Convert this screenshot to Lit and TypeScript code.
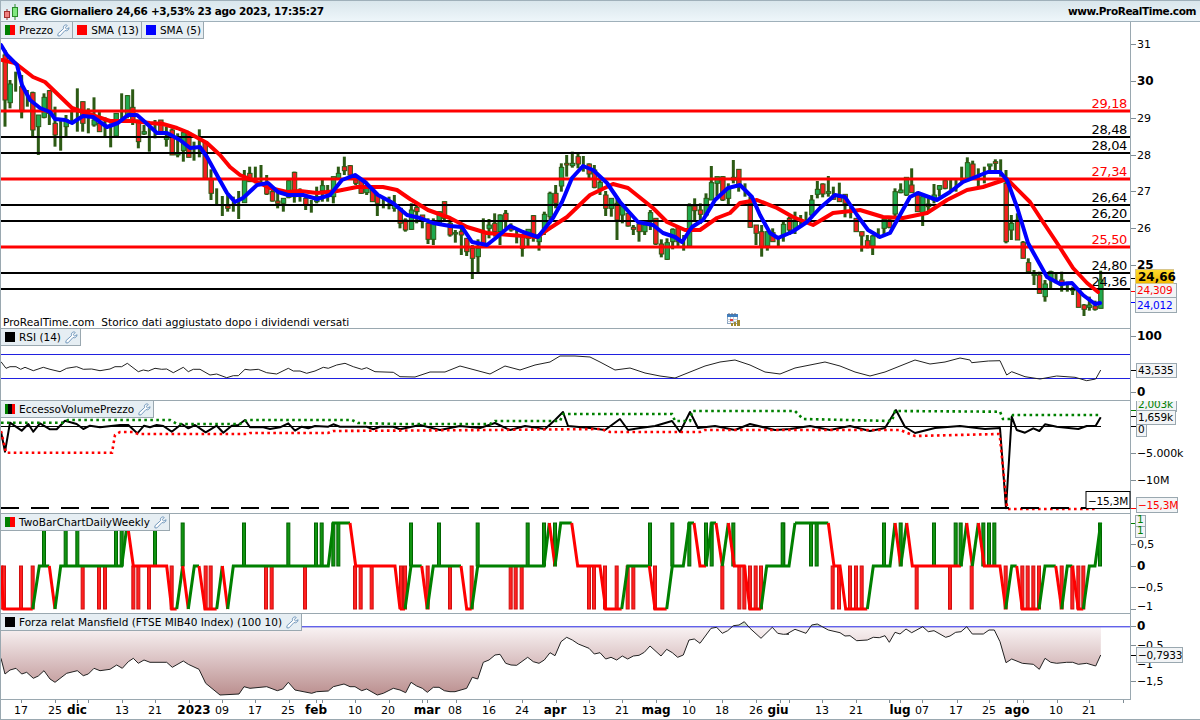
import { LitElement, html, css, svg } from "lit";
import { customElement } from "lit/decorators.js";

type C = { x: number; t: number; b: number; bt?: number; bb?: number; c?: string };
type Raw = [number, number, number, number?, number?, string?];
const cz = (ox: number, oy: number, a: Raw[]): C[] =>
  a.map(([z, t, b, bt, bb, c]) => ({
    x: ox + z / 3, t: oy + t / 3, b: oy + b / 3,
    bt: bt === undefined ? undefined : oy + bt / 3,
    bb: bb === undefined ? undefined : oy + bb / 3, c,
  }));

const CANDLES: C[] = [
  ...cz(0, 0, [[15,150,380,165,300,"r"],[30,240,325,252,308,"g"],[47,215,275],[65,225,355,260,335,"r"],[82,270,320],[98,275,408,278,390,"r"],[115,345,465,345,380,"g"],[132,280,355,292,352,"g"],[148,270,375,272,340,"r"],[165,320,440,370,405,"r"],[182,360,452],[198,345,408,360,380,"g"],[215,335,370],[232,265,395],[248,305,395,305,370,"r"],[265,325,400],[282,292,380,360,375,"g"],[298,330,395,370,395,"r"],[315,352,408],[332,370,442],[348,340,410,340,408,"g"],[365,280,362],[382,285,355,287,350,"g"],[398,268,375,322,362,"r"]]),
  ...cz(130, 120, [[25,0,85,0,65,"r"],[42,15,45,35,42,"g"],[58,20,95],[75,0,55],[92,0,40,0,35,"r"],[109,20,80,50,58,"g"],[126,25,105,30,105,"r"],[143,40,112,100,105,"g"],[160,35,125,38,92,"g"],[176,40,112,40,112,"r"],[192,65,122],[208,28,112],[225,65,175,65,175,"r"],[243,148,240,178,220,"r"],[260,205,252],[277,228,288],[293,225,275,258,265,"r"],[310,230,275],[326,213,297],[343,150,248,180,248,"g"],[359,140,185,160,185,"r"],[376,140,190],[393,135,190],[410,165,225,190,222,"r"],[427,200,245,215,243,"r"],[443,215,265,243,250,"r"],[460,235,275,235,250,"g"],[476,180,235,182,232,"g"],[493,155,248,157,230,"r"],[510,205,245],[527,225,270,235,255,"r"],[544,240,278],[560,200,250,230,245,"g"],[577,180,245,197,212,"g"],[593,195,245],[610,170,250,170,230,"g"],[625,140,180,160,175,"g"],[643,110,165,140,152,"r"],[660,135,175,137,165,"r"],[677,165,195,180,190,"r"],[693,175,222,180,220,"r"],[710,185,225,205,218,"g"],[727,200,245,210,245,"r"],[742,225,288,225,250,"r"],[760,235,265],[777,230,268],[793,225,275,255,265,"g"],[810,265,325,265,310,"r"],[826,295,335,300,330,"r"]]),
  ...cz(400, 120, [[34,250,330,270,328,"g"],[50,250,310,262,275,"r"],[67,285,325,285,295,"r"],[84,295,372,310,358,"r"],[100,295,375,310,358,"g"],[117,275,315,275,312,"g"],[133,245,300,245,295,"r"],[150,305,350,310,345,"r"],[166,330,368,338,342,"g"],[184,325,405,335,345,"r"],[200,355,408,355,395,"r"],[217,375,477,385,415,"r"],[234,358,458,385,410,"g"],[250,295,375,338,372,"r"],[267,297,355,315,325,"g"],[284,280,350,310,335,"r"],[300,283,375,285,335,"g"],[317,270,325,280,302,"r"],[333,310,335,320,330,"r"],[350,330,370],[367,350,410,350,385,"r"],[384,330,378,328,355,"g"],[400,285,365,287,350,"r"],[417,350,392,350,365,"g"],[433,275,345,283,325,"g"],[450,215,310,220,290,"g"],[467,195,265,220,250,"r"],[484,130,215,142,198,"g"],[500,105,170,130,135,"r"],[517,95,143,130,137,"g"],[534,100,145,110,132,"r"],[550,108,155],[567,130,175,132,162,"r"],[583,135,205,150,202,"r"],[600,170,225,187,207,"g"],[617,213,288,225,265,"r"],[634,235,290,235,265,"g"],[651,230,360,250,300,"r"],[667,250,310,260,285,"g"],[684,278,320,280,318,"r"],[700,315,345,322,328,"r"],[717,305,365,312,335,"r"],[734,305,345,315,335,"g"],[751,270,330,278,305,"g"],[767,295,375,295,372,"r"],[784,358,412,372,402,"r"],[801,355,420,368,418,"g"],[818,325,388,328,365,"g"],[834,318,380,320,365,"r"],[851,345,392],[868,250,378,258,378,"g"],[884,235,300,258,272,"r"],[901,250,312,270,283,"r"],[918,220,290,235,285,"g"],[934,138,240,188,240,"g"],[951,170,230,170,190,"g"],[968,168,243,170,240,"r"],[985,190,255,205,235,"g"],[1000,120,190,172,180,"r"],[1016,148,215,148,200,"r"]]),
  ...cz(730, 140, [[45,130,170],[60,170,262,190,262,"r"],[78,255,315,255,280,"r"],[95,255,350,275,320,"r"],[112,275,332,275,318,"g"],[128,265,305,278,305,"r"],[145,292,320],[160,245,305,253,285,"g"],[178,230,285,235,270,"r"],[195,215,282,240,265,"g"],[212,225,262],[228,215,245],[245,165,235,180,225,"g"],[262,123,175,148,163,"g"],[278,130,172,132,162,"r"],[295,108,170,155,160,"g"],[310,140,178,168,178,"r"],[328,128,185,172,185,"r"],[345,163,232,163,190,"r"],[362,200,235],[378,235,275,235,275,"r"],[395,275,335,275,288,"r"],[412,285,325,302,320,"r"],[428,285,345,288,318,"g"],[445,265,295],[462,238,285,238,265,"g"],[478,235,265,240,262,"r"],[495,145,230,155,222,"g"],[512,130,160,150,158,"g"],[529,112,168,112,165,"g"],[545,85,155,135,158,"r"],[562,155,215,165,215,"r"],[578,165,258,170,222,"g"],[595,165,215,192,200,"r"],[612,132,190,165,180,"g"],[628,135,170,137,148,"g"],[645,122,148,122,145,"r"],[662,120,150],[678,120,155],[695,80,130],[712,52,122,68,122,"g"],[728,62,115,72,115,"r"],[745,85,140],[763,80,130],[779,72,95,72,78,"g"],[796,58,100,65,70,"r"],[812,58,110],[828,90,310,130,305,"r"]]),
  ...cz(950, 180, [[184,105,180,130,150,"g"],[202,100,180,120,180,"r"],[219,183,235,187,235,"r"],[235,235,275,248,275,"r"],[252,270,315,282,286,"g"],[268,275,340,285,340,"r"],[285,300,365,312,350,"g"],[302,272,325,275,300,"g"],[318,280,310],[335,275,335,300,315,"r"],[352,305,335],[368,320,345,328,332,"g"],[385,330,382,330,382,"r"],[402,372,408,375,388,"r"],[418,350,392,375,382,"g"],[435,362,392,378,388,"r"],[452,272,385,300,385,"g"]]),
];

const pts = (ox: number, oy: number, a: number[]) => {
  const o: [number, number][] = [];
  for (let i = 0; i < a.length; i += 2) o.push([ox + a[i] / 3, oy + a[i + 1] / 3]);
  return o;
};
const P = (p: [number, number][]) => p.map(([x, y]) => `${x.toFixed(1)},${y.toFixed(1)}`).join(" ");

const BLUE = "1,45 7,55 17,65 22,85 30,100 40,108 50,112 55,119 65,120 72,123 83,116 93,117 107,127 118,123 128,115 137,115 145,122 157,133 167,133 180,140 190,148 200,147 207,157 218,177 227,193 235,202 243,198 257,185 268,183 278,192 288,195 303,195 317,199 330,195 342,180 355,175 365,182 378,195 393,203 407,215 420,218 433,223 450,226 462,227 472,242 487,245 497,237 510,226 523,232 538,237 553,218 562,202 572,178 583,166 593,170 607,183 620,202 638,222 653,225 663,233 675,237 682,242 692,227 703,220 715,200 728,188 740,185 752,197 760,215 770,233 778,238 792,232 807,222 820,208 835,195 845,197 857,215 868,230 880,237 890,233 900,215 910,197 918,193 937,200 950,192 963,182 978,176 988,172 1000,172 1007,180 1017,207 1028,243 1033,252 1047,277 1060,284 1072,283 1083,295 1095,304 1100,303";
const RED = "2,60 15,63 33,77 45,82 72,108 83,112 110,121 133,121 150,123 163,124 177,128 187,132 207,143 220,155 230,167 240,175 257,182 270,188 287,192 300,191 317,193 337,191 357,187 383,187 397,190 410,199 428,210 450,218 467,227 487,233 510,235 537,237 547,230 567,217 590,195 613,184 628,188 653,208 667,222 685,230 700,230 717,218 730,213 740,203 757,200 777,208 793,217 813,225 833,213 860,210 883,217 903,218 927,213 947,200 967,190 983,187 1007,179 1030,202 1043,222 1057,243 1073,268 1087,283 1098,292";
const LEVELS: [number, string, number][] = [
  [111, "29,18", 1], [137, "28,48", 0], [153, "28,04", 0], [179, "27,34", 1], [205, "26,64", 0],
  [221, "26,20", 0], [247, "25,50", 1], [273, "24,80", 0], [289, "24,36", 0],
];

const RSI = P([
  ...pts(0, 310, [3,155,18,175,30,170,48,170,62,178,75,172,100,182,130,172,150,178,180,185,200,175,230,170,250,178,275,177,300,182,330,177,345,170,365,170,382,160,415,185,430,180,445,183,465,175,485,178,500,177,520,188,550,172,565,185,580,178,600,178,630,195,650,192,680,203,700,197,715,197,735,178,750,180,775,178,800,188,830,192,865,175,880,183,900,183,920,190,945,183,970,172,985,175,1010,165,1035,160,1060,170,1085,178,1100,173,1125,185,1180,187,1200,200]),
  [415,377],[430,372],[445,372],[460,366],[475,370],[490,374],[505,366],[520,370],[535,365],[550,362],[560,356],[575,356],[590,357],[600,362],[615,370],[630,368],[645,373],[660,376],[675,378],[690,372],[705,366],[720,362],[735,360],[750,365],[765,372],[780,374],[795,368],[810,365],[825,362],[840,366],[855,372],[870,376],[885,372],[900,366],[915,360],[930,364],[945,362],[960,358],
  ...pts(950, 360, [60,0,65,8,115,3,150,2,170,45,185,35,225,50,270,57,320,48,375,52,410,62,437,57,452,30]),
]);

const EVP = P([
  ...pts(0, 310, [3,365,15,425,30,338,65,362,85,342,100,365,120,340,150,358,170,358,195,332,230,342,250,357,270,347,300,352,360,345,385,345,412,370,432,347,450,352,470,345,490,348,515,365,545,342,565,355,585,345,617,367,650,347,670,368,695,347,715,345,735,330,750,352,790,352,810,357,840,352,865,340,885,362,905,350,925,355,945,348,985,350,1000,343,1020,350,1100,350,1120,358,1140,350,1180,350,1200,358]),
  [420,425],[440,430],[460,426],[480,428],[495,423],[510,430],[525,426],[545,429],[555,420],[563,412],[568,426],[590,428],[605,430],[620,419],[628,430],[640,428],[655,426],[672,421],[680,432],[690,412],[698,428],[715,426],[735,430],[750,424],[775,430],[790,429],[810,426],[830,430],[850,426],[870,431],[885,428],[896,410],[905,427],[915,433],[935,428],[960,426],[985,429],[1000,428],
  ...pts(950, 360, [168,445,185,170,200,210,225,218,250,205,268,213,285,193,320,200,385,207,410,198,437,197,452,172]),
]);
const GREEN_DOT = "1,422.7 63,422.7 68,420 170,420 177,424 240,424 247,420 352,420 358,423 400,424 490,424 495,421 560,421 563,414 672,414 675,421 690,421 692,411 795,411 803,419 892,421 895,411 1000,411.7 1003,419 1010,419 1013,415 1101,415";
const RED_DOT = "1,431 6,452.7 112,452.7 115,435 120,432 133,432 138,434 248,434 250,433 328,433 333,431 490,430 600,429 610,432 700,432 705,430 900,430 915,436 999,434 1000,438 1007,507";
const RED_DOT_LOW = "1008,509 1095,509";

const L = (v: number) => 566 - v * 43;
type Seg = [string, ...number[]];
const segs = (ox: number, list: Seg[]) =>
  list.map(([c, ...a]) => {
    const p: string[] = [];
    for (let i = 0; i < a.length; i += 2) p.push(`${(ox + a[i] / 3).toFixed(1)},${L(a[i + 1])}`);
    return { c, p: p.join(" ") };
  });
const TWO = [
  ...segs(0, [["r",0,0,12,-1,98,-1],["g",98,-1,118,0,148,0],["r",148,0,165,-1],["g",165,-1,182,0,365,0,382,1],["r",382,1,400,0,500,0,515,-1,530,-1],["g",530,-1,548,0],["r",548,0,565,-1],["g",565,-1,583,0,597,0],["r",597,0,615,-1,650,-1],["g",650,-1,667,0],["r",667,0,683,-1],["g",683,-1,700,0,985,0,1000,1,1050,1],["r",1050,1,1067,0,1185,0,1200,-1]]),
  ...segs(400, [["r",0,-1,15,-1],["g",15,-1,33,0,65,0],["r",65,0,82,-1],["g",82,-1,100,0,183,0],["r",183,0,200,-1,215,-1],["g",215,-1,233,0,432,0,448,1],["r",448,1,465,0],["g",465,0,482,1,515,1],["r",515,1,533,0,600,0,617,-1,665,-1],["g",665,-1,683,0,748,0],["r",748,0,765,-1,800,-1],["g",800,-1,817,0,850,0,868,1,882,1],["r",882,1,900,0,918,0],["g",918,0,935,1,948,1],["r",948,1,967,0],["g",967,0,985,1],["r",985,1,1003,0,1033,0,1050,-1,1083,-1],["g",1083,-1,1100,0,1167,0,1185,1]]),
  ...segs(780, [["g",45,1,145,1],["r",145,1,162,0,180,0,197,-1,262,-1],["g",262,-1,280,0,330,0,345,1],["r",345,1,362,0],["g",362,0,380,1],["r",380,1,397,0,510,0]]),
  ...segs(950, [["r",0,0,33,0],["g",33,0,50,1],["r",50,1,67,0],["g",67,0,85,1],["r",85,1,103,0,150,0,167,-1],["g",167,-1,185,0,200,0],["r",200,0,217,-1,267,-1],["g",267,-1,285,0,317,0],["r",317,0,335,-1],["g",335,-1,352,0,367,0],["r",367,0,385,-1,400,-1],["g",400,-1,418,0,435,0,452,1]]),
];
const zx = (ox: number, a: number[]) => a.map((v) => ox + v / 3);
const UP = [
  ...zx(0, [132,197,232,348,365,465,548,732,865,948,965,1000,1015]),
  ...zx(400, [33,117,233,383,432,465,750,817,868,918,935,1000,1150]),
  ...zx(780, [8,93,110,312,362,462]),
  ...zx(950, [17,32,100,117,133,450]),
];
const DOWN = [
  ...zx(0, [4,12,63,98,248,297,315,400,415,447,515,617,632,798,815,915,1065,1082,1115]),
  ...zx(400, [3,15,83,150,215,332,347,365,567,582,615,650,683,700,765,967,1018,1033,1050,1067,1083]),
  ...zx(780, [158,177,210,228,245,410,510]),
  ...zx(950, [0,65,167,217,233,250,267,335,367,385,400]),
];

const MANS: [number, number][] = [
  ...pts(0, 510, [3,445,15,492,30,480,48,475,65,492,80,487,100,505,115,498,132,482,150,507,165,517,200,490,232,482,250,497,265,492,282,475,300,482,330,478,350,465,367,475,385,455,400,445,415,460,432,450,450,457,500,457,517,472,550,453,565,463,597,478,617,520,660,555,717,552,732,530,750,535,800,530,832,542,848,537,865,517,885,540,935,550,950,545,985,543,1000,530,1032,522,1050,530,1065,530,1085,542,1100,537,1132,555,1150,550,1180,535]),
  ...pts(400, 510, [0,540,17,548,33,517,50,528,67,535,82,547,100,532,117,532,133,542,150,545,165,545,200,535,217,502,233,507,250,457,267,450,285,435,300,433,317,460,333,465,350,466,383,442,400,455,417,460,433,450,450,428,465,437,483,395,500,382,517,390,535,402,567,415,583,432,600,428,617,447,633,442,650,450,667,438,683,447,700,438,717,436,733,427,750,408,783,438,800,418,817,428,833,442,850,435,867,390,883,387,900,400,933,355,950,352,967,370,983,362,1000,347,1017,345,1033,335,1050,355,1083,385,1117,352,1133,370,1150,373,1167,372]),
  ...pts(780, 510, [20,372,45,358,78,370,95,345,112,342,145,360,180,368,195,378,210,377,230,392,262,390,280,382,298,383,315,377,328,397,345,367,360,372,378,357,395,368,428,350,445,365,462,362,497,382]),
  ...pts(950, 510, [0,378,17,367,33,365,50,350,67,372,100,372,117,360,133,360,150,395,168,458,185,447,217,460,250,463,268,478,285,445,302,457,320,460,350,457,368,457,385,463,410,460,437,468,452,435]),
];
const MANS_AREA = `1,627 ${P(MANS)} 1101,627`;

const TIME: [number, string, number][] = [
  [21,"17",0],[55,"25",0],[77,"dic",1],[122,"13",0],[155,"21",0],[194,"2023",1],[222,"09",0],[255,"17",0],[288,"25",0],[316,"feb",1],[355,"10",0],[388,"20",0],[427,"mar",1],[455,"08",0],[489,"16",0],[522,"24",0],[555,"apr",1],[589,"13",0],[622,"21",0],[656,"mag",1],[689,"10",0],[722,"18",0],[756,"26",0],[778,"giu",1],[822,"13",0],[856,"21",0],[900,"lug",1],[922,"07",0],[956,"17",0],[989,"25",0],[1017,"ago",1],[1056,"10",0],[1089,"21",0],
];
const TICKS = [21,55,77,88,122,155,189,222,255,289,316,322,355,389,422,427,456,489,522,556,589,622,656,689,722,756,780,789,822,856,889,900,922,957,989,1017,1023,1057,1089,1123];

const wrench = html`<svg class="wr" viewBox="0 0 14 14" width="13" height="13"><path d="M9.5 1C7.5 1 6.5 3 7 5L1 10.5V12.8H3.2L8.6 7C10.6 8 13 6.5 13 4L10.6 5.6 8.8 4 11 1.5C10.5 1.2 10 1 9.5 1Z"/></svg>`;

const tick = (y: number, col = "#7f8c94") => svg`<line x1="1131" x2="1136" y1=${y + 0.5} y2=${y + 0.5} stroke=${col}/>`;
const axisLabel = (y: number, t: string, bold = false) => svg`<text class=${bold ? "ax b" : "ax"} x="1137" y=${y + 4}>${t}</text>`;
const tag = (x: number, y: number, w: number, h: number, t: string, col = "#000") =>
  svg`<rect x=${x + 0.5} y=${y + 0.5} width=${w} height=${h} fill="#f2f4f6" stroke="#9aa8b0"/><text class="tagt" x=${x + 2} y=${y + h - 3} fill=${col}>${t}</text>`;
const chrome = (y0: number, h: number) => svg`
  <line x1="0.5" x2="0.5" y1=${y0} y2=${y0 + h} stroke="#9aa8b0"/>
  <line x1="1130.5" x2="1130.5" y1=${y0} y2=${y0 + h} stroke="#9aa8b0"/>
  <line x1="0" x2="1131" y1=${y0 + h - 0.5} y2=${y0 + h - 0.5} stroke="#9aa8b0"/>`;

@customElement("app-root")
export class AppRoot extends LitElement {
  static styles = css`
    :host { display: block; width: 1200px; height: 720px; background: #fff; overflow: hidden;
      font-family: "DejaVu Sans", sans-serif; color: #000; }
    .top { height: 20px; display: flex; align-items: center; justify-content: space-between;
      border-top: 1px solid #9fb0ba; border-bottom: 1px solid #9fb0ba; border-left: 1px solid #9fb0ba;
      background: linear-gradient(#d9e6ec, #eef6fa); font-weight: bold; font-size: 10.5px; padding-right: 4px; }
    .title { display: flex; align-items: center; gap: 5px; padding-left: 2px; letter-spacing: -0.32px; }
    .site { letter-spacing: -0.4px; }
    .panel { position: relative; }
    .panel svg.c { display: block; width: 1200px; }
    .legend { position: absolute; left: 1px; top: 0; display: flex; }
    .chip { display: flex; align-items: center; gap: 4px; height: 16px; padding: 0 2px 0 4px; font-size: 10.5px;
      background: #e6eef3; border-right: 1px solid #9aa8b0; border-bottom: 1px solid #9aa8b0; white-space: nowrap; }
    .sw { width: 10px; height: 10px; flex: none; }
    .sgr { background: linear-gradient(90deg, #008000 50%, #ff0000 50%); }
    .sr { background: #ff0000; }
    .sb { background: #0000ff; }
    .sk { background: #000; }
    .sgkr { background: linear-gradient(90deg, #008000 33%, #000 33%, #000 66%, #ff0000 66%); }
    .wr { flex: none; }
    .wr path { fill: #fff; stroke: #6a92b8; stroke-width: 1; }
    .note { position: absolute; left: 3px; top: 294px; font-size: 10.6px; white-space: nowrap; }
    .cal { position: absolute; left: 727px; top: 291px; }
    text { font-family: "DejaVu Sans", sans-serif; }
    .ax { font-size: 11px; fill: #000; letter-spacing: -0.1px; }
    .b { font-weight: bold; font-size: 12px; }
    .lv { font-size: 13px; text-anchor: end; letter-spacing: -0.35px; }
    .tagt { font-size: 10.5px; letter-spacing: -0.2px; }
    .tagb { font-size: 12px; font-weight: bold; }
    .tm { font-size: 11px; text-anchor: middle; }
    .tm.tb { font-weight: bold; font-size: 12px; }
  `;

  private chips(a: [string, string, boolean][]) {
    return html`<div class="legend">${a.map(([s, t, w]) => html`<div class="chip"><span class="sw ${s}"></span>${t}${w ? wrench : ""}</div>`)}</div>`;
  }

  private priceSvg() {
    return svg`
      ${CANDLES.map((c) => svg`<rect x=${c.x - 1.5} y=${c.t} width="3" height=${c.b - c.t} fill="#2c5a14"/>
        ${c.bt !== undefined ? svg`<rect x=${c.x - 2} y=${c.bt} width="4.4" height=${Math.max(1, c.bb! - c.bt)} fill=${c.c === "g" ? "#1fa94e" : "#f52020"} stroke="#2c5a14"/>` : ""}`)}
      ${LEVELS.map(([y, t, r]) => svg`<line x1="0" x2="1130" y1=${y} y2=${y} stroke=${r ? "#ff0000" : "#000"} stroke-width=${r ? 3 : 2}/>
        <text class="lv" x="1127" y=${y - 3} fill=${r ? "#ff0000" : "#000"}>${t}</text>`)}
      <polyline points=${RED} fill="none" stroke="#ff0000" stroke-width="4" stroke-linejoin="round" stroke-linecap="round"/>
      <polyline points=${BLUE} fill="none" stroke="#0000ff" stroke-width="4" stroke-linejoin="round" stroke-linecap="round"/>
      ${chrome(22, 307)}
      ${[[44,"31"],[118,"29"],[155,"28"],[191,"27"],[228,"26"]].map(([y, t]) => svg`${tick(y as number)}${axisLabel(y as number, t as string)}`)}
      ${tick(81)}${axisLabel(81, "30", true)}${tick(265)}${axisLabel(265, "25", true)}
      ${tick(278, "#000")}${tick(291, "#ff0000")}${tick(302, "#0000ff")}
      ${tag(1135, 297, 41, 15, "24,012", "#0000ff")}
      ${tag(1135, 283, 41, 14, "24,309", "#ff0000")}
      <rect x="1135.5" y="269.5" width="38" height="14" fill="url(#gold)" stroke="#d8c68c"/>
      <text class="tagb" x="1138" y="281">24,66</text>
    `;
  }

  private rsiSvg() {
    return svg`
      <line x1="0" x2="1131" y1="354.5" y2="354.5" stroke="#2020e0"/>
      <line x1="0" x2="1131" y1="378.5" y2="378.5" stroke="#2020e0"/>
      <polyline points=${RSI} fill="none" stroke="#222" stroke-width="1"/>
      ${chrome(329, 72)}
      ${tick(336)}${axisLabel(336, "100", true)}
      ${tick(392)}${axisLabel(392, "0", true)}
      ${tick(370, "#000")}
      ${tag(1136, 363, 40, 14, "43,535")}
    `;
  }

  private evpSvg() {
    return svg`
      <line x1="1" x2="1101" y1="426.5" y2="426.5" stroke="#000"/>
      <polyline points=${RED_DOT_LOW} fill="none" stroke="#ff0000" stroke-width="2.6" stroke-dasharray="2.6 3.4"/>
      <line x1="1" x2="1095" y1="508" y2="508" stroke="#000" stroke-width="2" stroke-dasharray="18 12"/>
      <polyline points=${EVP} fill="none" stroke="#000" stroke-width="2" stroke-linejoin="round"/>
      <polyline points=${GREEN_DOT} fill="none" stroke="#008000" stroke-width="2.6" stroke-dasharray="2.6 3.4"/>
      <polyline points=${RED_DOT} fill="none" stroke="#ff0000" stroke-width="2.6" stroke-dasharray="2.6 3.4"/>
      ${chrome(401, 113)}
      ${tick(410, "#008000")}${tick(416, "#000")}${tick(426, "#000")}
      ${tick(453)}${axisLabel(453, "−5.000k")}${tick(480)}${axisLabel(480, "−10M")}
      ${tick(508, "#ff0000")}
      ${tag(1136, 399, 40, 12, "2,003k", "#008000")}
      ${tag(1136, 410, 39, 14, "1,659k")}
      ${tag(1136, 424, 10, 12, "0")}
      ${tag(1136, 497, 41, 15, "−15,3M", "#ff0000")}
      <rect x="1086" y="491.5" width="44" height="17" fill="#fff" stroke="#000"/>
      <text class="tagt" x="1088" y="505">−15,3M</text>
    `;
  }

  private twoSvg() {
    return svg`
      ${UP.map((x) => svg`<rect x=${x - 1.5} y=${L(1)} width="3" height="43" fill="#109410" stroke="#006400"/>`)}
      ${DOWN.map((x) => svg`<rect x=${x - 1.5} y=${L(0)} width="3" height="43" fill="#ff2020" stroke="#d01010"/>`)}
      ${TWO.map((s) => svg`<polyline points=${s.p} fill="none" stroke=${s.c === "g" ? "#008000" : "#ff0000"} stroke-width="3"/>`)}
      ${chrome(514, 100)}
      ${tick(523, "#008000")}
      ${tick(544)}${axisLabel(544, "0,5")}
      ${tick(566)}${axisLabel(566, "0", true)}
      ${tick(587)}${axisLabel(587, "−0,5")}
      ${tick(609)}${axisLabel(606, "−1")}
      ${tag(1135, 515, 10, 11, "1", "#008000")}
      ${tag(1135, 526, 10, 11, "1", "#008000")}
    `;
  }

  private mansSvg() {
    return svg`
      <defs>
        <linearGradient id="mg" gradientUnits="userSpaceOnUse" x1="0" x2="0" y1="627" y2="697">
          <stop offset="0" stop-color="#f9f3f4"/><stop offset="1" stop-color="#b98c8c"/>
        </linearGradient>
        <clipPath id="below"><rect x="0" y="627" width="1131" height="80"/></clipPath>
        <clipPath id="above"><rect x="0" y="600" width="1131" height="27"/></clipPath>
      </defs>
      <polygon points=${MANS_AREA} fill="url(#mg)" clip-path="url(#below)"/>
      <polygon points=${MANS_AREA} fill="#d2e2cc" clip-path="url(#above)"/>
      <line x1="0" x2="1131" y1="626.8" y2="626.8" stroke="#2020e0"/>
      <polyline points=${P(MANS)} fill="none" stroke="#222" stroke-width="1"/>
      ${chrome(614, 86)}
      ${tick(626)}${axisLabel(626, "0", true)}
      ${tick(645)}${axisLabel(645, "−0,5")}
      ${tick(655, "#000")}
      ${axisLabel(664, "−1")}
      ${tick(681)}${axisLabel(681, "−1,5")}
      ${tag(1136, 647, 46, 15, "−0,7933")}
    `;
  }

  private timeSvg() {
    return svg`
      <line x1="0.5" x2="0.5" y1="700" y2="719" stroke="#9aa8b0"/>
      ${TICKS.map((x) => svg`<line x1=${x + 0.5} x2=${x + 0.5} y1="700" y2="703" stroke="#7f8c94"/>`)}
      ${TIME.map(([x, t, b]) => svg`<text class=${b ? "tm tb" : "tm"} x=${x} y="714">${t}</text>`)}
      <line x1="0" x2="1200" y1="719.5" y2="719.5" stroke="#9aa8b0"/>
    `;
  }

  private panel(y0: number, h: number, body: unknown, legend: unknown) {
    return html`<div class="panel" style="height:${h}px">
      <svg class="c" height=${h} viewBox="0 ${y0} 1200 ${h}">${body}</svg>${legend}
    </div>`;
  }

  render() {
    return html`
      <div class="top">
        <div class="title">
          <svg width="16" height="18" viewBox="0 0 16 18">
            <line x1="4" x2="4" y1="7" y2="18" stroke="#8a3030"/><rect x="1.5" y="9.5" width="5" height="6" fill="#f08080" stroke="#a03030"/>
            <line x1="12" x2="12" y1="2" y2="18" stroke="#2a8a2a"/><rect x="9.5" y="5.5" width="5" height="9" fill="#7fe87f" stroke="#2a8a2a"/>
          </svg>
          <span>ERG Giornaliero 24,66 +3,53% 23 ago 2023, 17:35:27</span>
        </div>
        <span class="site">www.ProRealTime.com</span>
      </div>
      <svg width="0" height="0" style="position:absolute"><defs><linearGradient id="gold" x1="0" x2="0" y1="0" y2="1"><stop offset="0" stop-color="#ffdc30"/><stop offset="1" stop-color="#f0b800"/></linearGradient></defs></svg>
      ${this.panel(22, 307, this.priceSvg(), html`
        ${this.chips([["sgr","Prezzo",true],["sr","SMA (13)",false],["sb","SMA (5)",false]])}
        <div class="note">ProRealTime.com&nbsp; Storico dati aggiustato dopo i dividendi versati</div>
        <svg class="cal" width="13" height="13" viewBox="0 0 13 13">
          <rect x="0.5" y="1.5" width="10" height="9" fill="#fff" stroke="#8aa4c0"/><rect x="0" y="1" width="11" height="3" fill="#3f7fc0"/>
          <path d="M2 0v2M5 0v2M8 0v2" stroke="#667"/><path d="M0.5 6.5h10M0.5 8.5h10M3.5 4v6M6.5 4v6" stroke="#c0cede" />
          <rect x="3" y="6" width="3" height="2" fill="#e04040"/>
          <rect x="4" y="10" width="2" height="3" fill="#a08a30"/><rect x="7" y="9" width="2" height="4" fill="#a08a30"/><rect x="10" y="7" width="3" height="6" fill="#a08a30"/>
        </svg>`)}
      ${this.panel(329, 72, this.rsiSvg(), this.chips([["sk","RSI (14)",true]]))}
      ${this.panel(401, 113, this.evpSvg(), this.chips([["sgkr","EccessoVolumePrezzo",true]]))}
      ${this.panel(514, 100, this.twoSvg(), this.chips([["sgr","TwoBarChartDailyWeekly",true]]))}
      ${this.panel(614, 86, this.mansSvg(), this.chips([["sk","Forza relat Mansfield (FTSE MIB40 Index) (100 10)",true]]))}
      ${this.panel(700, 20, this.timeSvg(), "")}
    `;
  }
}
